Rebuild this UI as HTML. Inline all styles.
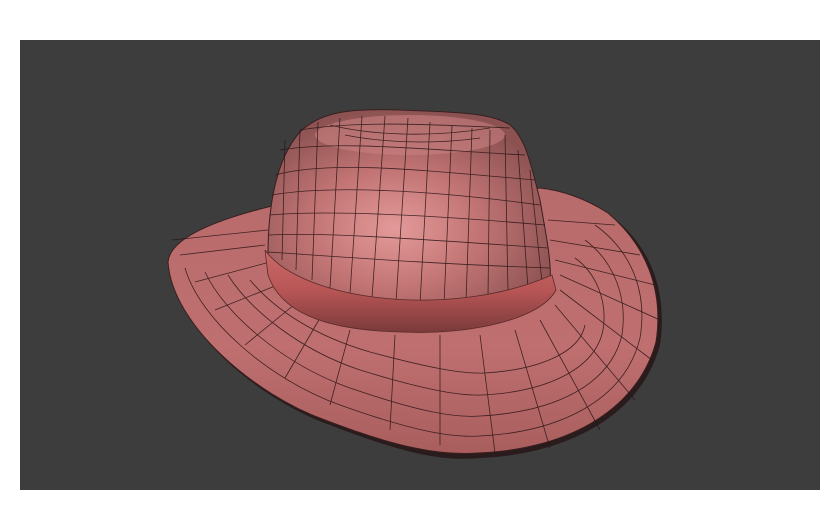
<!DOCTYPE html>
<html><head><style>
html,body{margin:0;padding:0;background:#fff;}
body{width:840px;height:512px;position:relative;overflow:hidden;}
</style></head><body>
<svg width="840" height="512" viewBox="0 0 840 512" xmlns="http://www.w3.org/2000/svg" style="position:absolute;left:0;top:0">
<defs>
<radialGradient id="crown" cx="0.45" cy="0.6" r="0.6">
<stop offset="0" stop-color="#e49a9a"/><stop offset="0.5" stop-color="#c27474"/><stop offset="1" stop-color="#8c5252"/>
</radialGradient>
<linearGradient id="brim" x1="0" y1="0" x2="0" y2="1">
<stop offset="0" stop-color="#b86b6b"/><stop offset="0.6" stop-color="#bf6f6f"/><stop offset="1" stop-color="#a95e5e"/>
</linearGradient>
<linearGradient id="band" x1="0" y1="0" x2="0" y2="1">
<stop offset="0" stop-color="#c96a68"/><stop offset="0.5" stop-color="#b75555"/><stop offset="1" stop-color="#7a3a3a"/>
</linearGradient>
</defs>
<rect x="0" y="0" width="840" height="512" fill="#fff"/>
<rect x="20" y="40" width="800" height="450" fill="#3d3d3d"/>
<!-- brim shadow -->
<path d="M170 265 C175 330 260 400 330 425 C400 452 440 462 480 458 C560 455 640 420 660 345 C668 290 650 245 610 215 L540 190 L270 210 C215 225 172 240 170 265 Z" fill="#2a1c1c"/>
<!-- brim -->
<path d="M168 262 C172 325 255 395 325 420 C395 447 440 456 478 453 C560 450 636 415 656 342 C664 290 646 245 608 213 C585 198 560 190 540 188 L272 206 C215 220 170 238 168 262 Z" fill="url(#brim)" stroke="#3a1f1f" stroke-width="1"/>
<!-- brim grid -->
<g stroke="#2a1414" stroke-width="0.8" fill="none" opacity="0.85">
<path d="M185 268 C200 320 270 380 340 405 C410 430 450 438 480 436 C560 432 625 400 640 338 C648 290 630 250 595 225"/>
<path d="M205 272 C225 315 285 365 350 388 C420 412 455 418 480 416 C555 412 610 385 622 335 C628 295 612 260 585 240"/>
<path d="M228 275 C250 310 300 350 360 370 C425 390 460 396 482 395 C545 392 595 370 603 330 C608 300 595 272 575 258"/>
<path d="M250 280 C275 310 315 336 370 352 C430 368 462 374 484 373 C540 370 580 352 585 325"/>
<path d="M172 240 L268 230 M180 255 L265 245 M195 282 L270 262 M215 310 L285 282 M245 345 L300 300 M285 378 L320 318 M330 405 L350 330 M390 430 L395 335 M440 445 L440 335 M495 453 L480 335 M550 448 L515 330 M600 430 L540 320 M635 400 L555 305 M652 360 L560 290 M660 320 L560 275 M655 285 L555 260 M640 255 L550 240 M615 225 L548 220"/>
</g>
<!-- crown -->
<path d="M268 255 C268 210 275 160 300 132 C320 112 350 108 400 110 C450 112 490 112 510 125 C525 138 530 160 540 200 C545 230 552 260 550 285 C500 320 330 320 268 255 Z" fill="url(#crown)" stroke="#3a1f1f" stroke-width="1"/>
<ellipse cx="410" cy="135" rx="95" ry="20" fill="#c98080" opacity="0.6"/>
<g stroke="#2a1414" stroke-width="0.8" fill="none" opacity="0.85">
<path d="M275 175 C330 160 420 170 535 180"/>
<path d="M272 195 C330 185 430 190 540 205"/>
<path d="M270 215 C330 210 430 215 545 225"/>
<path d="M269 235 C330 232 430 240 548 248"/>
<path d="M268 252 C330 256 430 264 550 268"/>
<path d="M280 150 C340 140 430 150 525 155"/>
<path d="M300 130 C360 120 440 125 510 128"/>
<path d="M285 140 L282 260 M300 130 L296 270 M318 122 L312 280 M340 118 L330 288 M362 116 L350 294 M385 116 L372 298 M408 118 L396 302 M430 122 L420 304 M452 125 L444 304 M472 128 L466 302 M490 130 L488 298 M505 135 L508 292 M518 150 L528 288 M530 170 L542 282"/>
<path d="M330 125 C370 135 430 138 490 128 M345 135 C380 142 430 145 480 138"/>
</g>
<!-- band -->
<path d="M265 250 C300 300 450 320 552 275 L556 290 C540 320 470 335 400 332 C320 330 280 310 268 275 Z" fill="url(#band)" stroke="#5a2a2a" stroke-width="0.8"/>
</svg>
</body></html>
